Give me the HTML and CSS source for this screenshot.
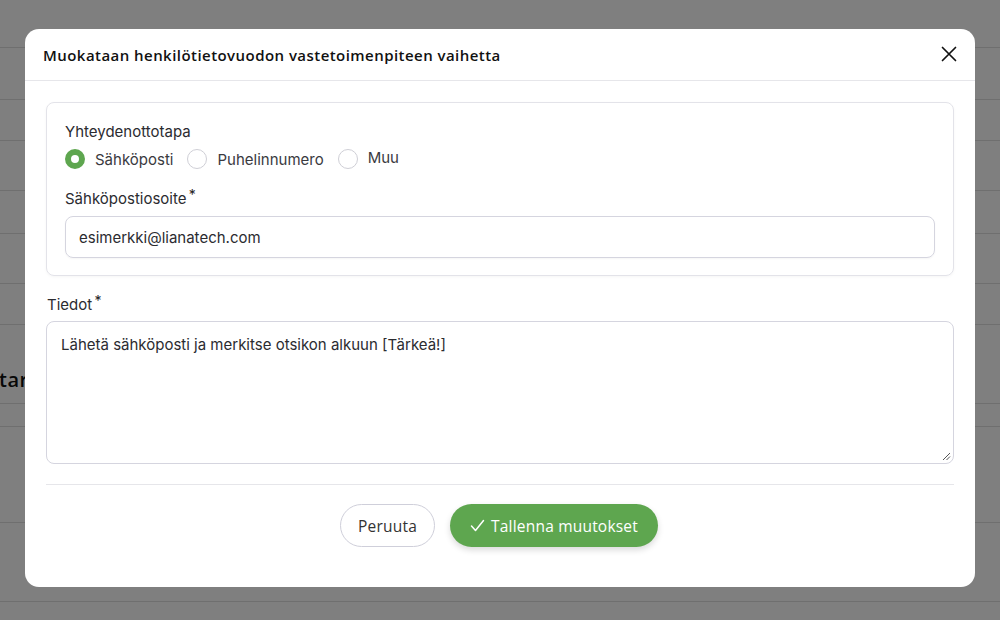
FILE: index.html
```html
<!DOCTYPE html>
<html lang="fi">
<head>
<meta charset="utf-8">
<title>Muokataan</title>
<link rel="stylesheet" href="styles.css">
</head>
<body>
<div class="page">
  <div class="row h48"></div>
  <div class="row h52"></div>
  <div class="row h41"></div>
  <div class="row h50"></div>
  <div class="row h43"></div>
  <div class="row h50"></div>
  <div class="row h41"></div>
  <div class="row h79 heading-row"><span class="bg-heading">tar</span></div>
  <div class="row h23"></div>
  <div class="row h96"></div>
  <div class="row h79"></div>
</div>
<div class="overlay"></div>
<div class="modal">
  <div class="modal-header">
    <h2 class="modal-title">Muokataan henkilötietovuodon vastetoimenpiteen vaihetta</h2>
    <button class="close-btn" aria-label="Sulje">
      <svg width="16" height="16" viewBox="0 0 16 16"><path d="M1.5 1.5 L14.5 14.5 M14.5 1.5 L1.5 14.5" stroke="#111" stroke-width="1.7" fill="none" stroke-linecap="round"/></svg>
    </button>
  </div>
  <div class="modal-body">
    <div class="card">
      <div class="field-label first">Yhteydenottotapa</div>
      <div class="radios">
        <label class="radio"><span class="dot checked"></span><span>Sähköposti</span></label>
        <label class="radio"><span class="dot"></span><span>Puhelinnumero</span></label>
        <label class="radio"><span class="dot"></span><span class="muu">Muu</span></label>
      </div>
      <div class="field-label second">Sähköpostiosoite <sup class="req">*</sup></div>
      <div class="input">esimerkki@lianatech.com</div>
    </div>
    <div class="field-label outer">Tiedot <sup class="req">*</sup></div>
    <div class="textarea">Lähetä sähköposti ja merkitse otsikon alkuun [Tärkeä!]
      <svg class="grip" width="10" height="10" viewBox="0 0 10 10"><path d="M9 2 L2 9 M9 5.5 L5.5 9" stroke="#555" stroke-width="1" fill="none"/></svg>
    </div>
    <div class="divider"></div>
    <div class="footer">
      <button class="btn btn-cancel">Peruuta</button>
      <button class="btn btn-save"><svg width="15" height="13" viewBox="0 0 15 13"><path d="M1.5 7 L5.5 11.5 L13.5 1.5" stroke="#fff" stroke-width="1.5" fill="none" stroke-linecap="round" stroke-linejoin="round"/></svg>Tallenna muutokset</button>
    </div>
  </div>
</div>
</body>
</html>
```

FILE: styles.css
```css
* { box-sizing: border-box; }
html, body { margin: 0; padding: 0; }
body {
  width: 1000px;
  height: 620px;
  overflow: hidden;
  background: #fff;
  font-family: Inter, "Liberation Sans", sans-serif;
  position: relative;
}
.page { width: 1000px; }
.row { border-bottom: 1px solid #dedede; }
.h48 { height: 48px; }
.h52 { height: 52px; }
.h41 { height: 41px; }
.h50 { height: 50px; }
.h43 { height: 43px; }
.h79 { height: 79px; }
.h23 { height: 23px; }
.h96 { height: 96px; }
.heading-row { display: flex; align-items: flex-start; padding-top: 43px; }
.bg-heading {
  font-family: "Open Sans", sans-serif;
  font-weight: 600;
  font-size: 20px;
  line-height: 24px;
  color: #111;
  margin-left: -1px;
  letter-spacing: 0.5px;
}
.overlay {
  position: absolute;
  inset: 0;
  background: rgba(0, 0, 0, 0.5);
}
.modal {
  position: absolute;
  left: 25px;
  top: 29px;
  width: 950px;
  height: 558px;
  background: #fff;
  border-radius: 14px;
  display: flex;
  flex-direction: column;
}
.modal-header {
  height: 52px;
  border-bottom: 1px solid #e6e6ea;
  display: flex;
  align-items: center;
  justify-content: space-between;
  padding: 0 18px 0 18px;
}
.modal-title {
  margin: 0;
  font-family: "Open Sans", sans-serif;
  font-weight: 600;
  font-size: 15px;
  color: #111;
  letter-spacing: 0.45px;
}
.close-btn {
  border: 0;
  background: none;
  padding: 0;
  width: 16px;
  height: 16px;
  display: flex;
  margin-top: -2px;
}
.modal-body {
  padding: 21px 21px 0 21px;
  display: flex;
  flex-direction: column;
}
.card {
  border: 1px solid #e3e3e9;
  border-radius: 8px;
  padding: 19px 18px 17px 18px;
  box-shadow: 0 1px 3px rgba(0,0,0,0.04);
}
.field-label {
  font-size: 15px;
  line-height: 20px;
  color: #2b2b30;
}
.field-label.second { margin-top: 20px; }
.field-label.outer { margin-top: 19px; margin-left: 1px; }
.req {
  font-size: 14px;
  line-height: 0;
  vertical-align: 4px;
  margin-left: -2px;
  color: #222;
}
.radios {
  display: flex;
  align-items: center;
  margin-top: 7px;
  height: 20px;
}
.radio {
  display: flex;
  align-items: center;
  gap: 10px;
  margin-right: 14px;
  font-size: 15px;
  color: #3a3a40;
}
.muu { margin-top: -3px; }
.dot {
  width: 20px;
  height: 20px;
  border-radius: 50%;
  border: 1px solid #cfcfd6;
  background: #fff;
  display: inline-block;
}
.dot.checked {
  border: 6px solid #5ea64f;
}
.input {
  margin-top: 7px;
  height: 42px;
  border: 1px solid #d5d5df;
  border-radius: 8px;
  padding: 0 13px;
  display: flex;
  align-items: center;
  font-size: 15px;
  color: #2b2b30;
  box-shadow: 0 1px 2px rgba(0,0,0,0.04);
}
.textarea {
  margin-top: 6px;
  height: 143px;
  border: 1px solid #d5d5df;
  border-radius: 8px;
  padding: 13px 14px;
  font-size: 15px;
  line-height: 20px;
  color: #2b2b30;
  position: relative;
}
.grip { position: absolute; right: 2px; bottom: 2px; }
.divider {
  margin-top: 20px;
  height: 1px;
  background: #e6e6ea;
}
.footer {
  display: flex;
  justify-content: center;
  gap: 15px;
  padding-top: 19px;
  margin-left: -2px;
}
.btn {
  height: 43px;
  border-radius: 22px;
  font-family: "Open Sans", sans-serif;
  font-weight: 500;
  font-size: 15.5px;
  letter-spacing: 0.2px;
  display: flex;
  align-items: center;
  justify-content: center;
}
.btn-cancel {
  width: 95px;
  background: #fff;
  border: 1px solid #cfcfda;
  color: #333;
}
.btn-save {
  width: 208px;
  background: #5ea64f;
  border: 0;
  color: #fff;
  gap: 6px;
  box-shadow: 0 3px 6px rgba(0,0,0,0.15);
}
```
